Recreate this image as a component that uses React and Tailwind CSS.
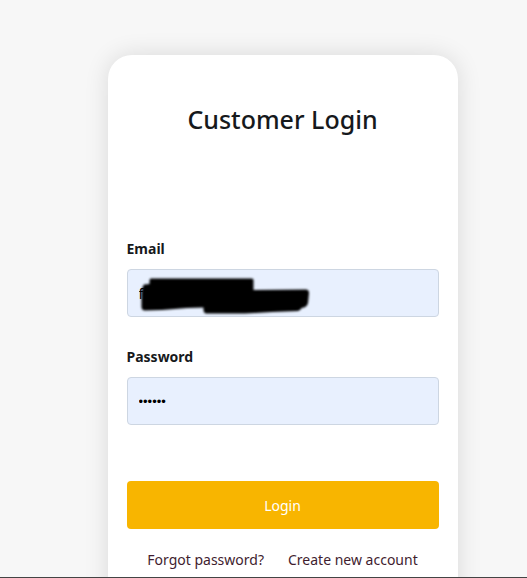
import React from "react";

const fieldClass =
  "block h-12 w-full rounded border border-[#cdd6e2] bg-[#e8f0fe] px-[11px] text-black outline-none";

function Scribble() {
  return (
    <svg
      className="pointer-events-none absolute top-0 left-0"
      width="190"
      height="48"
      viewBox="0 0 190 48"
      aria-hidden="true"
    >
      <defs>
        <filter id="soft" x="-5%" y="-15%" width="110%" height="130%">
          <feGaussianBlur stdDeviation="0.8" />
        </filter>
      </defs>
      <path
        d="M24 9.500Q22.500 9.500 22.500 11.500V15L17 15.500Q15 18 14.500 24V36Q14 41.500 18 41.500L35 41L60 39L76.500 38.500Q76 44 79 44.500H118L145 43L171 42Q174 41 174.500 39Q180 38.500 181 34L182 24Q182 20 178 20.500L126.500 21V11Q126.500 9 124 9.500Z"
        fill="#000"
        filter="url(#soft)"
      />
    </svg>
  );
}

export default function App() {
  return (
    <div className="flex h-screen items-start justify-center overflow-hidden border-b border-[#444] bg-[#f7f7f7] pt-[55px] pl-[38px] font-['Noto_Sans','Open_Sans',sans-serif] text-[#16191c]">
      <main className="min-h-[620px] w-full max-w-[350px] rounded-3xl bg-white px-[19px] pt-11 shadow-[0_0_24px_rgba(0,0,0,0.12)]">
        <h1 className="text-center text-[25px] leading-10 font-medium">Customer Login</h1>
        <form className="mt-[98px]" onSubmit={(e) => e.preventDefault()}>
          <label htmlFor="email" className="block text-[14px] leading-6 font-bold">
            Email
          </label>
          <div className="relative mt-2">
            <input id="email" type="text" defaultValue="f" className={`${fieldClass} text-[14px]`} />
            <Scribble />
          </div>
          <label htmlFor="password" className="mt-7 block text-[14px] leading-6 font-bold">
            Password
          </label>
          <input
            id="password"
            type="password"
            defaultValue="secret"
            className={`${fieldClass} mt-2 font-['Liberation_Sans',sans-serif] text-[13px]`}
          />
          <button
            type="submit"
            className="mt-14 block h-12 w-full rounded bg-[#f8b500] text-[14px] text-white"
          >
            Login
          </button>
        </form>
        <nav className="mt-[19px] flex justify-center gap-6 text-[14px] leading-6 whitespace-nowrap text-[#3f1d2f]">
          <a href="#forgot">Forgot password?</a>
          <a href="#create">Create new account</a>
        </nav>
      </main>
    </div>
  );
}
